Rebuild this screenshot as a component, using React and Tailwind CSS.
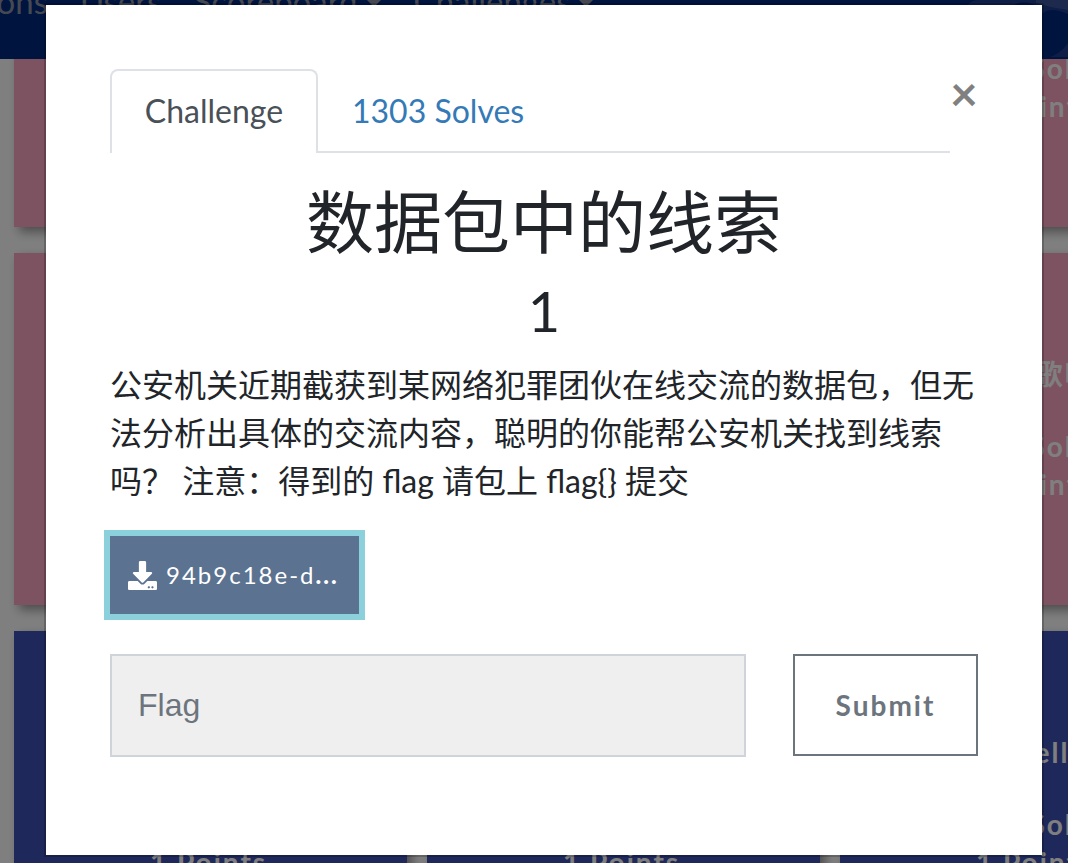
import { FaDownload } from "react-icons/fa";

const PINK = "bg-[#fba6c2]";
const BLUE = "bg-[#3f51b5]";

const rows = [
  { color: PINK, cards: [{ title: "二维码", solves: 4121 }, { title: "大白", solves: 3876 }, { title: "基础破解", solves: 2954 }] },
  { color: PINK, cards: [{ title: "镜子里", solves: 2412 }, { title: "小明", solves: 2203 }, { title: "来首歌吧", solves: 1982 }] },
  { color: BLUE, cards: [{ title: "隐藏", solves: 1877 }, { title: "假如", solves: 1790 }, { title: "Shell", solves: 1645 }] },
];

function Card({ title, solves, color }) {
  return (
    <article
      className={`${color} flex h-[352px] flex-col items-center pt-[102px] pr-1 text-[28px] leading-[38px] font-bold tracking-[2px] text-white shadow-[5px_5px_10px_rgba(0,0,0,0.4)]`}
    >
      <h3>{title}</h3>
      <p className="mt-[34px]">{solves} Solves</p>
      <p>1 Points</p>
    </article>
  );
}

function Nav() {
  return (
    <header className="relative z-10 flex h-[59px] shrink-0 items-start overflow-hidden bg-[#002880] text-[33px] leading-[34px] text-[#8c93a3]">
      <nav className="-mt-4 -ml-[152px] flex gap-8">
        <a href="#notifications" className="w-[200px] text-right">Notifications</a>
        <a href="#users">Users</a>
        <a href="#scoreboard" className="flex items-center gap-2">Scoreboard <Caret /></a>
        <a href="#challenges" className="flex items-center gap-2">Challenges <Caret /></a>
      </nav>
      <svg className="absolute top-0 right-0 h-[59px] w-[100px]" viewBox="0 0 100 59" aria-hidden="true">
        <path d="M0 5Q4 0 10 0H100V14Q82 6 74 14V8Q60 0 50 3L44 6H0Z" fill="#2c4694" opacity=".7" />
        <path d="M68 0H100V10Q84 8 68 3Z" fill="#5064a4" opacity=".6" />
        <path d="M82 57Q93 53 100 43V57Z" fill="#38509b" opacity=".5" />
      </svg>
    </header>
  );
}

function Caret() {
  return (
    <svg className="mt-1 h-[8px] w-[16px]" viewBox="0 0 16 8" aria-hidden="true">
      <path d="M0 0H16L8 8Z" fill="currentColor" />
    </svg>
  );
}

export default function App() {
  return (
    <div className="relative min-h-screen overflow-hidden font-['Lato','Noto_Sans_CJK_SC',sans-serif]">
      <div className="absolute inset-0 flex flex-col overflow-hidden bg-white">
        <Nav />
        <main className="-mt-[184px] grid grid-cols-[393px_393px_393px] gap-x-[20px] gap-y-[26px] pl-[14px]">
          {rows.map((row) =>
            row.cards.map((card) => <Card key={card.title} color={row.color} {...card} />)
          )}
        </main>
      </div>

      <div className="relative z-20 min-h-screen bg-black/50 pt-[3px] pr-6 pb-[6px] pl-11">
        <section
          role="dialog"
          aria-modal="true"
          aria-labelledby="challenge-title"
          className="border-2 border-black/20 bg-white bg-clip-padding px-16 pt-16 pb-[98px] text-[32px] leading-[48px] text-[#212529]"
        >
          <div className="flex items-start">
            <div role="tablist" className="flex flex-1 border-b-2 border-[#dee2e6]">
              <button
                role="tab"
                aria-selected="true"
                className="-mb-[2px] w-[208px] rounded-t-lg border-2 border-b-0 border-[#dee2e6] bg-white pt-4 pb-[18px] text-[#495057]"
              >
                Challenge
              </button>
              <button role="tab" aria-selected="false" className="px-[34px] pt-[18px] pb-4 text-[#337ab7]">
                1303 Solves
              </button>
            </div>
            <button aria-label="Close" className="w-7 text-[48px] font-bold text-[#808080]">
              ×
            </button>
          </div>

          <h2 id="challenge-title" className="mt-7 text-center text-[68px] leading-[82px]">
            数据包中的线索
          </h2>
          <h3 className="mt-[14px] text-center text-[56px] leading-[67px]">1</h3>
          <p className="mt-[17px]">
            公安机关近期截获到某网络犯罪团伙在线交流的数据包，但无法分析出具体的交流内容，聪明的你能帮公安机关找到线索吗？ 注意：得到的 flag 请包上 flag{"{}"} 提交
          </p>

          <a
            href="#download"
            className="mt-[31px] flex h-[78px] w-[249px] items-center gap-[9px] bg-[#5b7290] pl-[18px] text-[24px] tracking-[2px] text-white shadow-[0_0_0_6px_#8cd0db]"
          >
            <FaDownload className="size-[29px]" aria-hidden="true" />
            <span>
              94b9c18e-d<b className="font-black">...</b>
            </span>
          </a>

          <form className="mt-10 flex items-start gap-[47px]" onSubmit={(e) => e.preventDefault()}>
            <input
              aria-label="Flag"
              placeholder="Flag"
              className="h-[103px] min-w-0 flex-1 border-2 border-[#ced4da] bg-[#efefef] px-[26px] font-['Liberation_Sans',sans-serif] placeholder:text-[#6c757d]"
            />
            <button
              type="submit"
              className="h-[102px] w-[185px] border-2 border-[#6c757d] text-[28px] font-bold tracking-[2px] text-[#6c757d]"
            >
              Submit
            </button>
          </form>
        </section>
      </div>
    </div>
  );
}
